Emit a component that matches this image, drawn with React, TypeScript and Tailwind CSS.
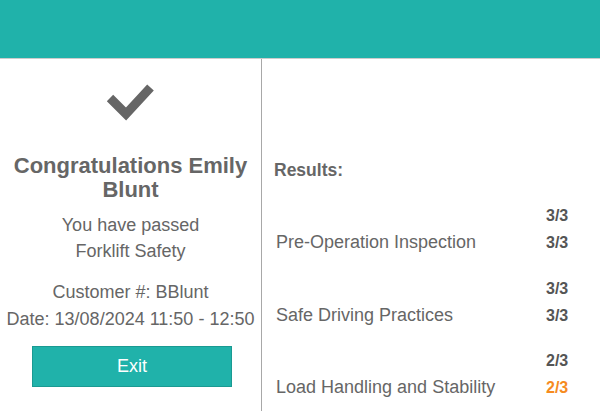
import React from 'react';

const RESULTS = [
  { topic: 'Pre-Operation Inspection', first: '3/3', final: '3/3', full: true },
  { topic: 'Safe Driving Practices', first: '3/3', final: '3/3', full: true },
  { topic: 'Load Handling and Stability', first: '2/3', final: '2/3', full: false },
];

const CheckMark: React.FC = () => (
  <svg width="54" height="44" viewBox="0 0 54 44" className="block">
    <path d="M6 18 L22 34 L46.5 7.5" fill="none" stroke="#666" strokeWidth="9" strokeLinejoin="miter" />
  </svg>
);

export default function App() {
  return (
    <div className="w-[600px] h-[411px] bg-white overflow-hidden font-['Liberation_Sans',Arial,sans-serif] text-[#666]">
      <div className="h-[59px] bg-[#20b2aa] border-b border-[#cccccc]" />
      <div className="flex h-[352px]">
        <div className="w-[262px] shrink-0 border-r border-[#a8a8a8] flex flex-col items-center pt-[21px]">
          <CheckMark />
          <h1 className="mt-[30px] text-[22px] leading-[24px] font-bold text-center px-2">Congratulations Emily Blunt</h1>
          <div className="mt-[10px] text-[18px] leading-[26px] text-center">
            <p>You have passed</p>
            <p>Forklift Safety</p>
          </div>
          <div className="mt-[15px] text-[18px] leading-[27px] text-center whitespace-nowrap">
            <p>Customer #: BBlunt</p>
            <p>Date: 13/08/2024 11:50 - 12:50</p>
          </div>
          <button className="mt-[13px] self-start ml-[32px] w-[200px] h-[41px] bg-[#20b2aa] border border-[#1a9a92] text-white text-[18px]">
            Exit
          </button>
        </div>
        <div className="flex-1 pl-[12px] pt-[101px]">
          <h2 className="text-[17.5px] leading-[20px] font-bold">Results:</h2>
          <div className="mt-[22px] flex flex-col gap-[18.5px] pl-[2px]">
            {RESULTS.map((r) => (
              <div key={r.topic} className="grid grid-cols-[270px_auto]">
                <div className="flex items-end text-[18px] leading-[27px]">{r.topic}</div>
                <div className="text-[16px] leading-[27px] font-bold">
                  <div className="text-[#555]">{r.first}</div>
                  <div className={r.full ? 'text-[#555]' : 'text-[#f68b1f]'}>{r.final}</div>
                </div>
              </div>
            ))}
          </div>
        </div>
      </div>
    </div>
  );
}
